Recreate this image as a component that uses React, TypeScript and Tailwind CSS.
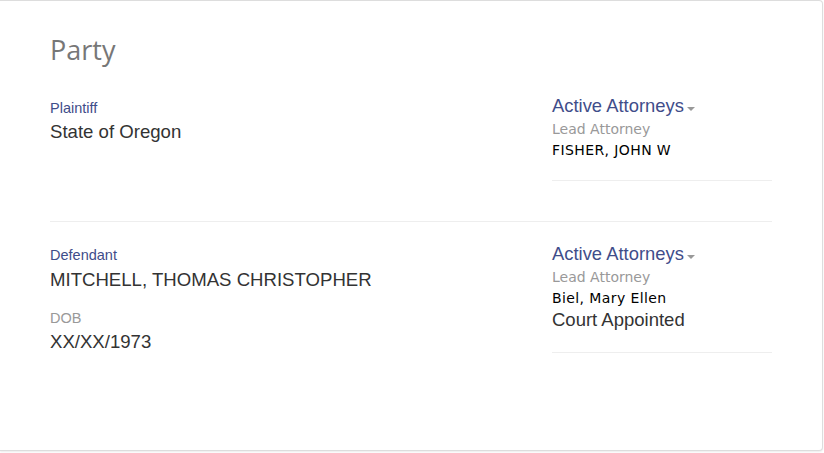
const sans = "font-['Liberation_Sans',Arial,sans-serif]";
const verdana = "font-['DejaVu_Sans',Verdana,sans-serif]";

type Attorney = { name: string; note?: string };

const AttorneyBlock = ({ attorney }: { attorney: Attorney }) => (
  <div className="w-[220px] border-b border-[#eeeeee] pb-[22px]">
    <div className={`${sans} text-[18.4px] leading-[20px] text-[#3f4d8a]`}>
      Active Attorneys
      <span className="ml-[3px] inline-block align-[1px] border-t-[4px] border-x-[4px] border-x-transparent border-t-[#999999]" />
    </div>
    <div className={`${verdana} mt-[5px] text-[14px] leading-[16px] text-[#999999]`}>Lead Attorney</div>
    <div className={`${verdana} mt-[5px] text-[14px] leading-[16px] tracking-[0.4px] text-black`}>{attorney.name}</div>
    {attorney.note && (
      <div className={`${sans} mt-[4px] text-[18.5px] leading-[20px] text-[#333333]`}>{attorney.note}</div>
    )}
  </div>
);

const App = () => {
  return (
    <div className="h-[453px] w-[824px] bg-white">
      <div className="h-[451px] w-[823px] rounded-r-[4px] border-y border-r border-[#dddddd] bg-white pl-[50px] pr-[50px] pt-[34px] shadow-[0_1px_2px_rgba(0,0,0,0.08)]">
        <h2 className="font-['Open_Sans',sans-serif] text-[27px] leading-[29px] text-[#777777]">Party</h2>

        <div className="mt-[32px] flex items-start justify-between border-b border-[#eeeeee] pb-[40px]">
          <div className="mt-[4px]">
            <div className={`${sans} text-[14.5px] leading-[16px] text-[#3f4d8a]`}>Plaintiff</div>
            <div className={`${sans} mt-[6px] text-[18.6px] leading-[20px] text-[#333333]`}>State of Oregon</div>
          </div>
          <AttorneyBlock attorney={{ name: 'FISHER, JOHN W' }} />
        </div>

        <div className="flex items-start justify-between pt-[22px]">
          <div className="mt-[3px]">
            <div className={`${sans} text-[14.5px] leading-[16px] text-[#3f4d8a]`}>Defendant</div>
            <div className={`${sans} mt-[7px] text-[18.6px] leading-[20px] text-[#333333]`}>MITCHELL, THOMAS CHRISTOPHER</div>
            <div className={`${sans} mt-[20px] text-[14.5px] leading-[16px] text-[#999999]`}>DOB</div>
            <div className={`${sans} mt-[6px] text-[18.6px] leading-[20px] text-[#333333]`}>XX/XX/1973</div>
          </div>
          <AttorneyBlock attorney={{ name: 'Biel, Mary Ellen', note: 'Court Appointed' }} />
        </div>
      </div>
    </div>
  );
};

export default App;
